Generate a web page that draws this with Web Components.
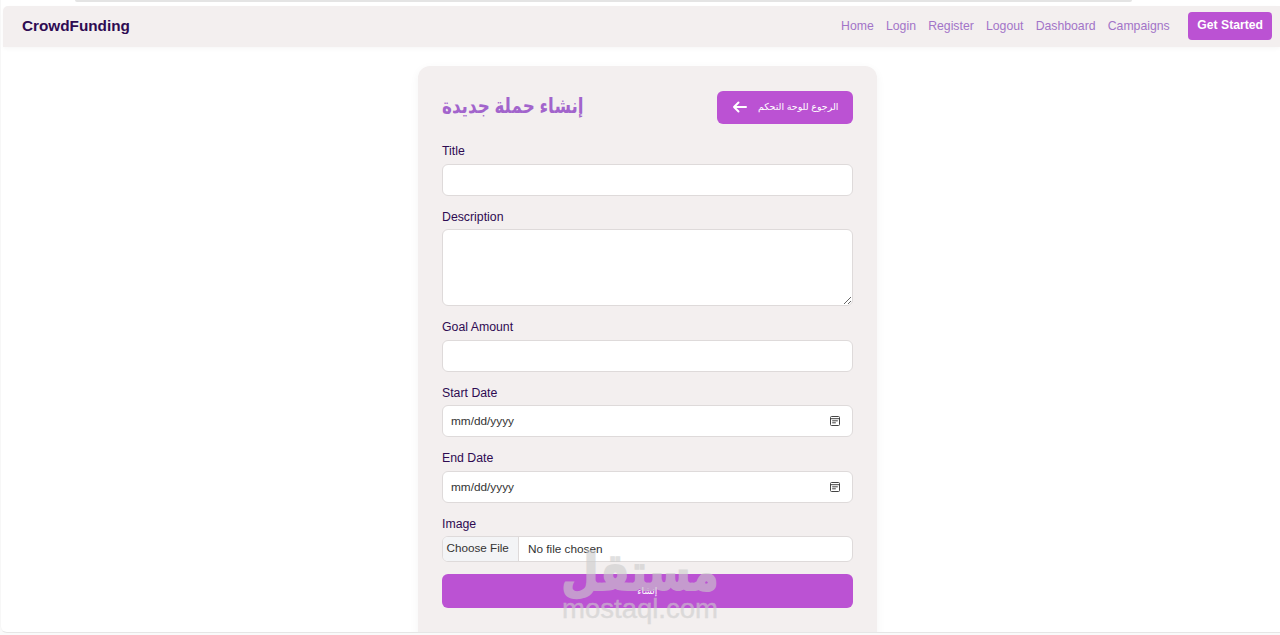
<!DOCTYPE html>
<html lang="en">
<head>
<meta charset="utf-8">
<title>CrowdFunding</title>
<style>
  html, body { margin: 0; height: 100%; }
  body { background: #fafafa; font-family: "Liberation Sans", "DejaVu Sans", sans-serif; overflow: hidden; }
</style>
</head>
<body>
<page-shell>
  <top-nav brand="CrowdFunding">
    <a href="#">Home</a>
    <a href="#">Login</a>
    <a href="#">Register</a>
    <a href="#">Logout</a>
    <a href="#">Dashboard</a>
    <a href="#">Campaigns</a>
  </top-nav>
  <campaign-form></campaign-form>
  <mostaql-mark></mostaql-mark>
</page-shell>

<script>
class PageShell extends HTMLElement {
  constructor() {
    super();
    this.attachShadow({ mode: 'open' }).innerHTML = `
      <style>
        :host { display: block; position: relative; height: 633px; overflow: hidden; box-sizing: border-box; padding: 6px 0 0 2px; background: #fff; border-left: 1px solid #f7f7f7; border-bottom: 1px solid #e6e6e6; border-bottom-left-radius: 7px; }
        .sliver { position: absolute; top: 0; left: 74px; width: 1057px; height: 2px; background: #e4e4e4; border-radius: 0 0 4px 4px; }
      </style>
      <div class="sliver"></div>
      <slot></slot>`;
  }
}

class TopNav extends HTMLElement {
  constructor() {
    super();
    this.attachShadow({ mode: 'open' }).innerHTML = `
      <style>
        :host { display: flex; align-items: center; justify-content: space-between; height: 41px; box-sizing: border-box; padding: 0 8px 1px 19px; background: #f3efef; border-radius: 5px 0 0 0; box-shadow: 0 2px 4px rgba(0,0,0,.03); }
        .brand { font-size: 15.3px; font-weight: 700; color: #2e0b52; }
        nav { display: flex; align-items: center; }
        ::slotted(a) { font-size: 12.25px; color: #a274c8; text-decoration: none; margin-right: 12.2px; }
        .cta { margin-left: 6.4px; display: flex; align-items: center; height: 28px; padding: 0 9px 2px; background: #bb52d3; color: #fff; font-size: 12.2px; font-weight: 700; border-radius: 4px; box-sizing: border-box; }
      </style>
      <div class="brand">${this.getAttribute('brand')}</div>
      <nav><slot></slot><div class="cta">Get Started</div></nav>`;
  }
}

class FormField extends HTMLElement {
  constructor() {
    super();
    this.attachShadow({ mode: 'open' }).innerHTML = `
      <style>
        :host { display: block; margin-bottom: 11.9px; }
        label { display: block; font-size: 12.3px; line-height: 19px; margin-bottom: 2.7px; color: #2e0b52; }
      </style>
      <label>${this.getAttribute('label')}</label>
      <slot></slot>`;
  }
}

const CALENDAR = "data:image/svg+xml," + encodeURIComponent('<svg xmlns="http://www.w3.org/2000/svg" viewBox="0 0 12 12" fill="none" stroke="#444" stroke-width="1"><rect x="1.5" y="1.5" width="9" height="9" rx="1"/><path d="M1.5 3.7h9M3.2 5.8h5.6M3.2 7.8h3.6"/></svg>');

class CampaignForm extends HTMLElement {
  constructor() {
    super();
    this.attachShadow({ mode: 'open' }).innerHTML = `
      <style>
        :host { display: block; box-sizing: border-box; width: 459px; margin: 19px auto 0; position: relative; left: 6px; height: 590px; padding: 25px 24.5px 0 24px; background: #f3efef; border-radius: 12px; box-shadow: 0 3px 10px rgba(0,0,0,.05); }
        header { display: flex; align-items: center; justify-content: space-between; height: 33px; margin-bottom: 18px; }
        h2 { margin: 0 0 4px; font: 700 21px "Liberation Sans", "DejaVu Sans", sans-serif; color: #a264cc; transform: scaleX(.8); transform-origin: left center; }
        .back { display: flex; align-items: center; box-sizing: border-box; width: 136px; height: 33px; padding: 0 14px 2px 15px; justify-content: space-between; background: #bb52d3; color: #fff; border-radius: 6px; font-size: 9.5px; white-space: nowrap; }
        .back svg { width: 15px; height: 12px; display: block; }
        input, textarea { display: block; width: 100%; box-sizing: border-box; margin: 0; border: 1px solid #dedada; border-radius: 6px; background: #fff; font: 12.2px "Liberation Sans", sans-serif; color: #333; padding: 0 9px; outline: 0; }
        input { height: 32px; }
        input[type=date] { font-size: 11.8px; padding: 0 9px 1px 8px; }
        input[type=date]::-webkit-datetime-edit-month-field,
        input[type=date]::-webkit-datetime-edit-day-field,
        input[type=date]::-webkit-datetime-edit-year-field { padding: 0; }
        input[type=date]::-webkit-calendar-picker-indicator { width: 12px; height: 12px; padding: 0; margin: 0 1.5px 0 0; background: url("${CALENDAR}") center / 12px no-repeat; opacity: 1; }
        textarea { height: 77px; padding: 8px 9px; resize: vertical; }
        input[type=file] { height: 26px; padding: 0; margin: -1px 0 12px; font-size: 11.8px; color: #333; }
        input[type=file]::file-selector-button { height: 26px; margin: -1px 9px 0 0; padding: 0 9px 2px 3.5px; border: 0; border-right: 1px solid #dedada; background: #f3f4f6; color: #333; font: 11.7px "Liberation Sans", sans-serif; }
        .submit { display: flex; align-items: center; justify-content: center; height: 34px; background: #bb52d3; color: #fff; border-radius: 6px; font-size: 9px; }
      </style>
      <header>
        <h2 dir="rtl">إنشاء حملة جديدة</h2>
        <div class="back">
          <svg viewBox="0 0 15 12" fill="none" stroke="#fff" stroke-width="2" stroke-linecap="round" stroke-linejoin="round"><path d="M14 6H2M6.5 1.5 2 6l4.5 4.5"/></svg>
          <span dir="rtl">الرجوع للوحة التحكم</span>
        </div>
      </header>
      <form-field label="Title"><input type="text"></form-field>
      <form-field label="Description"><textarea></textarea></form-field>
      <form-field label="Goal Amount"><input type="text"></form-field>
      <form-field label="Start Date"><input type="date"></form-field>
      <form-field label="End Date"><input type="date"></form-field>
      <form-field label="Image"><input type="file"></form-field>
      <div class="submit" dir="rtl">إنشاء</div>`;
  }
}

class MostaqlMark extends HTMLElement {
  constructor() {
    super();
    this.attachShadow({ mode: 'open' }).innerHTML = `
      <style>
        :host { position: absolute; left: 539px; top: 547px; width: 200px; text-align: center; color: #cccccc; opacity: .6; pointer-events: none; font-family: "Liberation Sans", "DejaVu Sans", sans-serif; font-weight: 700; }
        .ar { font-size: 43px; line-height: 50px; -webkit-text-stroke: 1.5px #cccccc; transform: scaleY(1.2); }
        .en { font-size: 27.5px; line-height: 24px; font-weight: 400; -webkit-text-stroke: .4px #cccccc; }
      </style>
      <div class="ar" dir="rtl">مستقل</div>
      <div class="en">mostaql.com</div>`;
  }
}

customElements.define('form-field', FormField);
customElements.define('page-shell', PageShell);
customElements.define('top-nav', TopNav);
customElements.define('campaign-form', CampaignForm);
customElements.define('mostaql-mark', MostaqlMark);
</script>
</body>
</html>
